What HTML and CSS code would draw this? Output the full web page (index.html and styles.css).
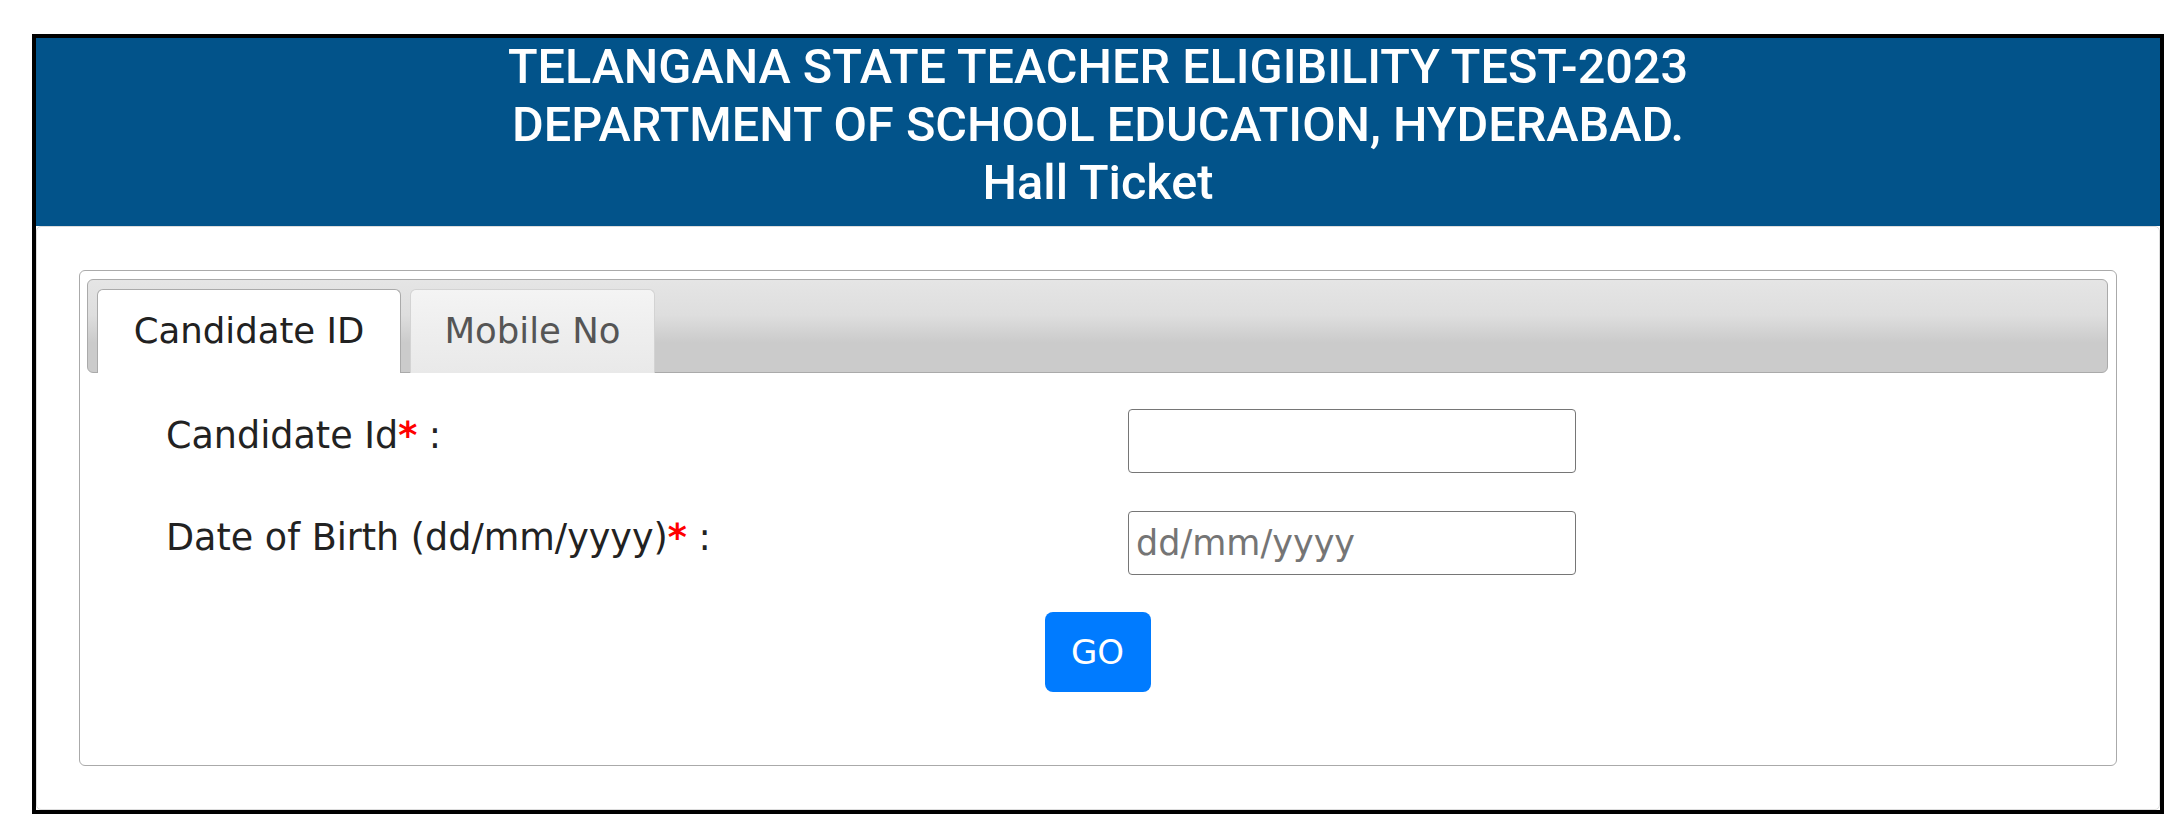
FILE: index.html
```html
<!DOCTYPE html>
<html lang="en">
<head>
<meta charset="utf-8">
<title>TS TET 2023 - Hall Ticket</title>
<link rel="stylesheet" href="styles.css">
</head>
<body>
<div class="page">
  <header class="banner">
    <div class="banner-line">TELANGANA STATE TEACHER ELIGIBILITY TEST-2023</div>
    <div class="banner-line">DEPARTMENT OF SCHOOL EDUCATION, HYDERABAD.</div>
    <div class="banner-line">Hall Ticket</div>
  </header>
  <main class="panel">
    <div class="tabs">
      <ul class="tab-nav">
        <li class="tab tab-active tab-candidate">Candidate ID</li>
        <li class="tab tab-mobile">Mobile No</li>
      </ul>
      <form class="tab-panel">
        <div class="form-row">
          <label class="form-label" for="cid">Candidate Id<span class="req">*</span> :</label>
          <input class="form-input" id="cid" type="text">
        </div>
        <div class="form-row form-row-second">
          <label class="form-label" for="dob">Date of Birth (dd/mm/yyyy)<span class="req">*</span> :</label>
          <input class="form-input" id="dob" type="text" placeholder="dd/mm/yyyy">
        </div>
        <button class="go-btn" type="button">GO</button>
      </form>
    </div>
  </main>
</div>
</body>
</html>
```

FILE: styles.css
```css
* {
  box-sizing: border-box;
}

body {
  margin: 0;
  background: #ffffff;
  font-family: "DejaVu Sans", Verdana, sans-serif;
  color: #222222;
}

.page {
  margin: 34px 0 0 32px;
  width: 2132px;
  border: 4px solid #000000;
  background: #ffffff;
}

.banner {
  height: 188px;
  padding: 0 0 14px;
  background: #02538a;
  color: #ffffff;
  text-align: center;
  font-family: Roboto, "Liberation Sans", Arial, sans-serif;
  font-weight: 500;
  font-size: 48.6px;
  line-height: 58px;
}

.panel {
  height: 584px;
  border: 1px solid #dcdcdc;
  border-radius: 5px;
  padding: 43px 42px;
}

.tabs {
  height: 496px;
  border: 1px solid #aaaaaa;
  border-radius: 6px;
  padding: 8px 8px 0 7px;
  display: flex;
  flex-direction: column;
}

.tab-nav {
  list-style: none;
  margin: 0;
  padding: 9px 8px 0 9px;
  display: flex;
  gap: 9px;
  border: 1px solid #aaaaaa;
  border-radius: 6px;
  background: linear-gradient(to bottom, #e5e5e5 0%, #dedede 38%, #cbcbcb 68%, #cbcbcb 100%);
}

.tab {
  height: 84px;
  margin-bottom: -1px;
  padding: 22px 0 23px;
  border: 1px solid #d3d3d3;
  border-bottom: 0;
  border-radius: 6px 6px 0 0;
  font-size: 35.5px;
  line-height: 38px;
  text-align: center;
  white-space: nowrap;
  color: #555555;
  background: linear-gradient(to bottom, #f4f4f4 0%, #eeeeee 50%, #e9e9e9 100%);
  position: relative;
}

.tab-candidate {
  width: 304px;
}

.tab-mobile {
  width: 245px;
}

.tab-active {
  border-color: #aaaaaa;
  background: #ffffff;
  color: #212121;
  z-index: 1;
}

.tab-panel {
  flex: 1;
  margin: 0;
  padding: 36px 0 0;
  display: flex;
  flex-direction: column;
}

.form-row {
  display: grid;
  grid-template-columns: 962px 448px;
  height: 64px;
  margin-left: 79px;
}

.form-row-second {
  margin-top: 38px;
}

.form-label {
  font-size: 36.5px;
  line-height: 40px;
  margin-top: 7px;
  color: #222222;
  white-space: nowrap;
}

.req {
  color: #ff0000;
  font-weight: bold;
}

.form-input {
  width: 448px;
  height: 64px;
  border: 1.5px solid #767676;
  border-radius: 4px;
  padding: 0 7px;
  font-family: "DejaVu Sans", Verdana, sans-serif;
  font-size: 35px;
  color: #222222;
  background: #ffffff;
  outline: none;
}

.form-input::placeholder {
  color: #757575;
}

.go-btn {
  align-self: center;
  margin-top: 37px;
  width: 106px;
  height: 80px;
  padding: 0;
  border: 0;
  border-radius: 8px;
  background: #007bff;
  color: #ffffff;
  font-family: "DejaVu Sans", Verdana, sans-serif;
  font-size: 34px;
  line-height: 40px;
}
```
